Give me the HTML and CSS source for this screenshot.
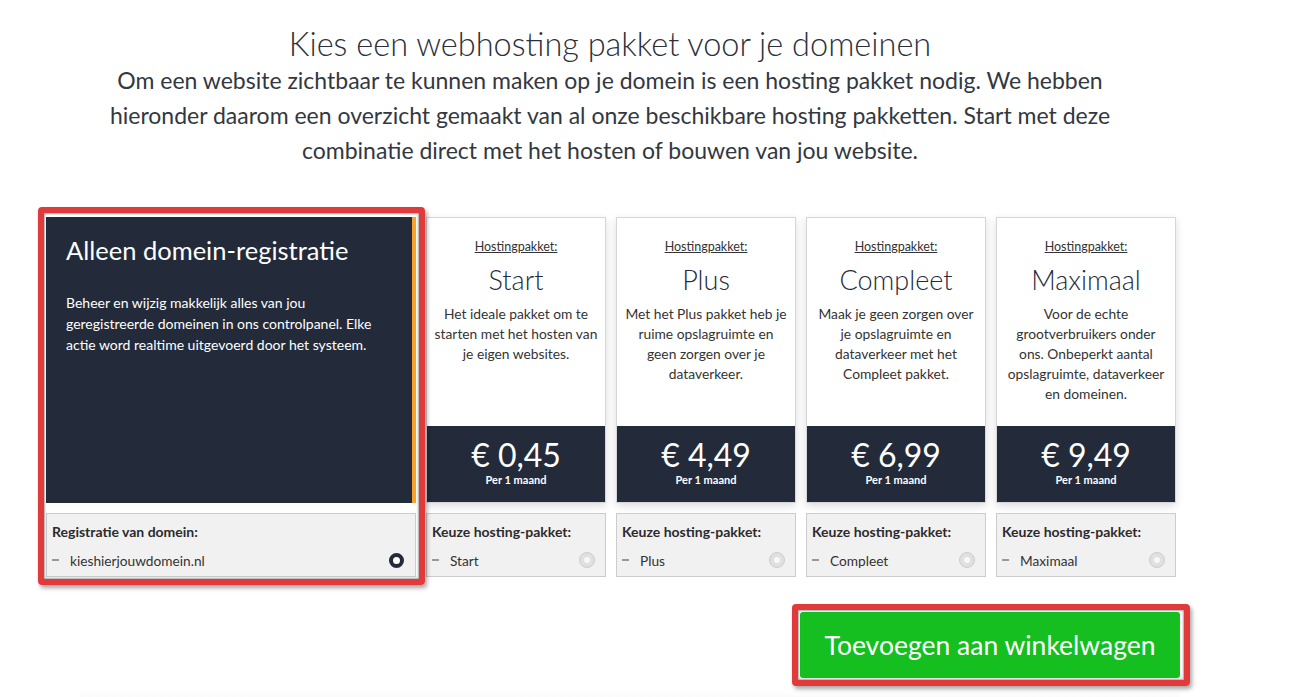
FILE: index.html
```html
<!DOCTYPE html>
<html lang="nl">
<head>
<meta charset="utf-8">
<title>Kies een webhosting pakket</title>
<link rel="stylesheet" href="styles.css">
</head>
<body>
<main class="page">
  <header class="intro">
    <h1 class="intro-title">Kies een webhosting pakket voor je domeinen</h1>
    <p class="intro-text">Om een website zichtbaar te kunnen maken op je domein is een hosting pakket nodig. We hebben<br>hieronder daarom een overzicht gemaakt van al onze beschikbare hosting pakketten. Start met deze<br>combinatie direct met het hosten of bouwen van jou website.</p>
  </header>

  <section class="plans">
    <div class="plan plan-domain">
      <div class="plan-main domain-main">
        <h2 class="domain-title">Alleen domein-registratie</h2>
        <p class="domain-text">Beheer en wijzig makkelijk alles van jou<br>geregistreerde domeinen in ons controlpanel. Elke<br>actie word realtime uitgevoerd door het systeem.</p>
      </div>
      <div class="choice">
        <div class="choice-label">Registratie van domein:</div>
        <div class="choice-row"><span class="dash"></span><span class="choice-name">kieshierjouwdomein.nl</span><span class="radio radio-on"></span></div>
      </div>
      <div class="highlight"></div>
    </div>

    <div class="plan">
      <div class="plan-main">
        <div class="plan-kicker">Hostingpakket:</div>
        <h2 class="plan-title">Start</h2>
        <p class="plan-text">Het ideale pakket om te<br>starten met het hosten van<br>je eigen websites.</p>
        <div class="price"><div class="price-amount">€ 0,45</div><div class="price-period">Per 1 maand</div></div>
      </div>
      <div class="choice">
        <div class="choice-label">Keuze hosting-pakket:</div>
        <div class="choice-row"><span class="dash"></span><span class="choice-name">Start</span><span class="radio"></span></div>
      </div>
    </div>

    <div class="plan">
      <div class="plan-main">
        <div class="plan-kicker">Hostingpakket:</div>
        <h2 class="plan-title">Plus</h2>
        <p class="plan-text">Met het Plus pakket heb je<br>ruime opslagruimte en<br>geen zorgen over je<br>dataverkeer.</p>
        <div class="price"><div class="price-amount">€ 4,49</div><div class="price-period">Per 1 maand</div></div>
      </div>
      <div class="choice">
        <div class="choice-label">Keuze hosting-pakket:</div>
        <div class="choice-row"><span class="dash"></span><span class="choice-name">Plus</span><span class="radio"></span></div>
      </div>
    </div>

    <div class="plan">
      <div class="plan-main">
        <div class="plan-kicker">Hostingpakket:</div>
        <h2 class="plan-title">Compleet</h2>
        <p class="plan-text">Maak je geen zorgen over<br>je opslagruimte en<br>dataverkeer met het<br>Compleet pakket.</p>
        <div class="price"><div class="price-amount">€ 6,99</div><div class="price-period">Per 1 maand</div></div>
      </div>
      <div class="choice">
        <div class="choice-label">Keuze hosting-pakket:</div>
        <div class="choice-row"><span class="dash"></span><span class="choice-name">Compleet</span><span class="radio"></span></div>
      </div>
    </div>

    <div class="plan">
      <div class="plan-main">
        <div class="plan-kicker">Hostingpakket:</div>
        <h2 class="plan-title">Maximaal</h2>
        <p class="plan-text">Voor de echte<br>grootverbruikers onder<br>ons. Onbeperkt aantal<br>opslagruimte, dataverkeer<br>en domeinen.</p>
        <div class="price"><div class="price-amount">€ 9,49</div><div class="price-period">Per 1 maand</div></div>
      </div>
      <div class="choice">
        <div class="choice-label">Keuze hosting-pakket:</div>
        <div class="choice-row"><span class="dash"></span><span class="choice-name">Maximaal</span><span class="radio"></span></div>
      </div>
    </div>
  </section>

  <div class="actions">
    <div class="cart-wrap">
      <button class="cart-btn" type="button">Toevoegen aan winkelwagen</button>
      <div class="highlight highlight-btn"></div>
    </div>
  </div>
  <div class="shade"></div>
</main>
</body>
</html>
```

FILE: styles.css
```css
* { box-sizing: border-box; }

html, body {
  margin: 0;
  padding: 0;
  background: #ffffff;
}

body {
  font-family: "Lato", "Open Sans", sans-serif;
  color: #2b303b;
  overflow: hidden;
}

.page {
  width: 1144px;
  margin-left: 36px;
}

.intro {
  padding-top: 25px;
  text-align: center;
  padding-left: 4px;
}

.intro-title {
  margin: 0;
  font-size: 32.5px;
  line-height: 38px;
  font-weight: 300;
  color: #2b303b;
}

.intro-text {
  margin: 0;
  font-size: 23px;
  line-height: 35px;
  font-weight: 400;
  color: #333840;
}

.plans {
  display: grid;
  grid-template-columns: repeat(6, 180px);
  column-gap: 10px;
  margin-top: 49px;
  margin-left: 10px;
}

.plan {
  display: flex;
  flex-direction: column;
}

.plan-domain {
  grid-column: span 2;
  position: relative;
}

.plan-main {
  height: 286px;
  display: flex;
  flex-direction: column;
  align-items: center;
  text-align: center;
  background: #ffffff;
  border: 1px solid #d6d6d6;
  box-shadow: 0 3px 8px rgba(0, 0, 0, 0.14);
  padding-top: 22px;
}

.plan-kicker {
  font-size: 12.5px;
  line-height: 14px;
  color: #333;
  text-decoration: underline;
}

.plan-title {
  margin: 9px 0 0;
  font-size: 27px;
  line-height: 34px;
  font-weight: 300;
  color: #232b3a;
}

.plan-text {
  margin: 7px 0 0;
  font-size: 13.8px;
  line-height: 20px;
  color: #333;
}

.price {
  margin-top: auto;
  align-self: stretch;
  height: 76px;
  background: #232b3a;
  color: #ffffff;
  padding-top: 11px;
}

.price-amount {
  font-size: 32px;
  line-height: 36px;
  font-weight: 400;
}

.price-period {
  font-size: 11px;
  line-height: 14px;
  font-weight: 700;
}

.domain-main {
  background: #232b3a;
  border: none;
  border-right: 4px solid #f6a22c;
  box-shadow: none;
  align-items: flex-start;
  text-align: left;
  padding: 17px 20px 0;
  color: #ffffff;
}

.domain-title {
  margin: 0;
  font-size: 25.5px;
  line-height: 32px;
  font-weight: 400;
}

.domain-text {
  margin: 26px 0 0;
  font-size: 14px;
  line-height: 21px;
}

.choice {
  margin-top: 10px;
  height: 64px;
  background: #f1f1f1;
  border: 1px solid #cccccc;
  padding: 10px 10px 0 5px;
}

.choice-label {
  font-size: 14px;
  line-height: 16px;
  font-weight: 700;
  color: #2b2b2b;
}

.choice-row {
  margin-top: 10px;
  height: 20px;
  display: flex;
  align-items: center;
  font-size: 13.7px;
  color: #333;
}

.dash {
  width: 7px;
  height: 2px;
  background: #999999;
  margin-right: 11px;
}

.choice-name {
  flex: 1;
}

.radio {
  width: 16px;
  height: 16px;
  border-radius: 50%;
  background: #e0e0e0;
  border: 1px solid #cccccc;
  position: relative;
}

.radio::after {
  content: "";
  position: absolute;
  left: 4px;
  top: 4px;
  width: 6px;
  height: 6px;
  border-radius: 50%;
  background: #f7f7f7;
}

.radio-on {
  width: 15px;
  height: 15px;
  background: #ffffff;
  border: 4px solid #232b3a;
  margin-right: 1px;
}

.radio-on::after {
  display: none;
}

.highlight {
  position: absolute;
  top: -10px;
  left: -8px;
  right: -9px;
  bottom: -8px;
  border: 6px solid #e03a3b;
  border-radius: 4px;
  box-shadow: 2px 3px 4px rgba(0, 0, 0, 0.35), inset 0 0 2px 1px rgba(0, 0, 0, 0.35);
  pointer-events: none;
}

.actions {
  display: flex;
  justify-content: flex-end;
  margin-top: 35px;
}

.cart-wrap {
  position: relative;
}

.cart-btn {
  display: block;
  width: 380px;
  height: 66px;
  border: none;
  border-radius: 3px;
  background: #15bf1f;
  color: #ffffff;
  font-family: "Lato", "Open Sans", sans-serif;
  font-size: 26.5px;
  font-weight: 400;
  cursor: pointer;
}

.highlight-btn {
  top: -8px;
  left: -8px;
  right: -10px;
  bottom: -8px;
}

.shade {
  margin-top: 12px;
  margin-left: 44px;
  height: 20px;
  background: linear-gradient(to bottom, #ffffff, #f3f3f3);
}
```
